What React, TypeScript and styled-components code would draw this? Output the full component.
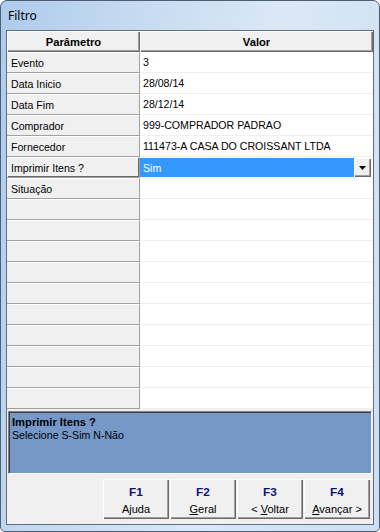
import React from "react";
import styled, { createGlobalStyle } from "styled-components";

const Global = createGlobalStyle`
  html, body { margin: 0; padding: 0; background: #ffffff; }
  * { box-sizing: border-box; }
`;

const Window = styled.div`
  width: 380px;
  height: 532px;
  border: 1px solid #4d5e75;
  border-radius: 7px 7px 5px 5px;
  background: linear-gradient(100deg, #aecbeb 0%, #c6dbf1 30%, #dae8f6 60%, #cddff3 100%);
  padding: 0 5px 6px 5px;
  display: flex;
  flex-direction: column;
  overflow: hidden;
`;

const TitleBar = styled.div`
  height: 29px;
  display: flex;
  align-items: center;
  padding-left: 2px;
  padding-bottom: 1px;
  font-family: "Noto Sans", "Open Sans", sans-serif;
  font-size: 12px;
  color: #000;
`;

const Client = styled.div`
  flex: 1;
  border: 1px solid #5f6e82;
  background: #f0f0f0;
  display: flex;
  flex-direction: column;
  font-family: "Liberation Sans", Arial, sans-serif;
  font-size: 10.6px;
  color: #000;
`;

const Grid = styled.div`
  display: grid;
  grid-template-columns: 133px 1fr;
  grid-auto-rows: 21px;
  background: #ffffff;
`;

const HeaderCell = styled.div`
  display: flex;
  align-items: center;
  justify-content: center;
  font-weight: bold;
  font-size: 11.2px;
  background: #f0f0f0;
  box-shadow: inset 1px 1px 0 #ffffff, inset -1px -1px 0 #696969, inset -2px -2px 0 #a0a0a0;
`;

const ParamCell = styled.div<{ $active?: boolean }>`
  display: flex;
  align-items: center;
  padding-left: 4px;
  background: #f0f0f0;
  border-right: 1px solid #a0a0a0;
  border-top: 1px solid #ffffff;
  border-bottom: 1px solid #a0a0a0;
  ${(p) =>
    p.$active
      ? `box-shadow: inset 1px 0 0 #ffffff, inset -1px -1px 0 #696969;`
      : ``}
`;

const ValueCell = styled.div`
  display: flex;
  align-items: center;
  padding-left: 3px;
  background: #ffffff;
  border-bottom: 1px solid #f0f0f0;
`;

const SelectedValue = styled.div`
  display: flex;
  align-items: stretch;
  padding: 1px 2px 1px 0;
  background: #ffffff;
`;

const SelectedText = styled.div`
  flex: 1;
  display: flex;
  align-items: center;
  padding-left: 3px;
  background: #3399ff;
  color: #ffffff;
`;

const DropButton = styled.div`
  width: 17px;
  display: flex;
  align-items: center;
  justify-content: center;
  background: #f0f0f0;
  box-shadow: inset 1px 1px 0 #ffffff, inset -1px -1px 0 #696969, inset -2px -2px 0 #a0a0a0;
`;

const InfoPanel = styled.div`
  margin: 2px 1px 0 1px;
  height: 63px;
  background: #7598c9;
  border: 1px solid;
  border-color: #808080 #ffffff #ffffff #808080;
  box-shadow: inset 1px 1px 0 #404040;
  padding: 4px 3px;
  line-height: 13px;
`;

const InfoTitle = styled.div`
  font-weight: bold;
  font-size: 11.2px;
`;

const ButtonBar = styled.div`
  margin-top: 5px;
  display: flex;
  justify-content: flex-end;
  gap: 1px;
  padding-right: 3px;
`;

const FnButton = styled.div`
  width: 66px;
  height: 40px;
  display: flex;
  flex-direction: column;
  align-items: center;
  padding-top: 6px;
  gap: 3px;
  background: #f0f0f0;
  box-shadow: inset 1px 1px 0 #ffffff, inset -1px -1px 0 #696969, inset -2px -2px 0 #a0a0a0;
  font-size: 11px;
  line-height: 14px;
`;

const FnKey = styled.div`
  font-weight: bold;
  font-size: 11.8px;
  color: #0c1470;
`;

const Mn = styled.span`
  text-decoration: underline;
`;

const rows: { p: string; v: string }[] = [
  { p: "Evento", v: "3" },
  { p: "Data Inicio", v: "28/08/14" },
  { p: "Data Fim", v: "28/12/14" },
  { p: "Comprador", v: "999-COMPRADOR PADRAO" },
  { p: "Fornecedor", v: "111473-A CASA DO CROISSANT LTDA" },
  { p: "Imprimir Itens ?", v: "Sim" },
  { p: "Situação", v: "" },
];

const emptyCount = 10;

export default function App() {
  return (
    <>
      <Global />
      <Window>
        <TitleBar>Filtro</TitleBar>
        <Client>
          <Grid>
            <HeaderCell>Parâmetro</HeaderCell>
            <HeaderCell>Valor</HeaderCell>
            {rows.map((r, i) =>
              r.p === "Imprimir Itens ?" ? (
                <React.Fragment key={i}>
                  <ParamCell $active>{r.p}</ParamCell>
                  <SelectedValue>
                    <SelectedText>{r.v}</SelectedText>
                    <DropButton>
                      <svg width="7" height="4" viewBox="0 0 7 4">
                        <path d="M0 0 H7 L3.5 4 Z" fill="#000" />
                      </svg>
                    </DropButton>
                  </SelectedValue>
                </React.Fragment>
              ) : (
                <React.Fragment key={i}>
                  <ParamCell>{r.p}</ParamCell>
                  <ValueCell>{r.v}</ValueCell>
                </React.Fragment>
              )
            )}
            {Array.from({ length: emptyCount }).map((_, i) => (
              <React.Fragment key={"e" + i}>
                <ParamCell />
                <ValueCell />
              </React.Fragment>
            ))}
          </Grid>
          <InfoPanel>
            <InfoTitle>Imprimir Itens ?</InfoTitle>
            <div>Selecione S-Sim N-Não</div>
          </InfoPanel>
          <ButtonBar>
            <FnButton>
              <FnKey>F1</FnKey>
              <div>Ajuda</div>
            </FnButton>
            <FnButton>
              <FnKey>F2</FnKey>
              <div>
                <Mn>G</Mn>eral
              </div>
            </FnButton>
            <FnButton>
              <FnKey>F3</FnKey>
              <div>
                &lt; <Mn>V</Mn>oltar
              </div>
            </FnButton>
            <FnButton>
              <FnKey>F4</FnKey>
              <div>
                <Mn>A</Mn>vançar &gt;
              </div>
            </FnButton>
          </ButtonBar>
        </Client>
      </Window>
    </>
  );
}
